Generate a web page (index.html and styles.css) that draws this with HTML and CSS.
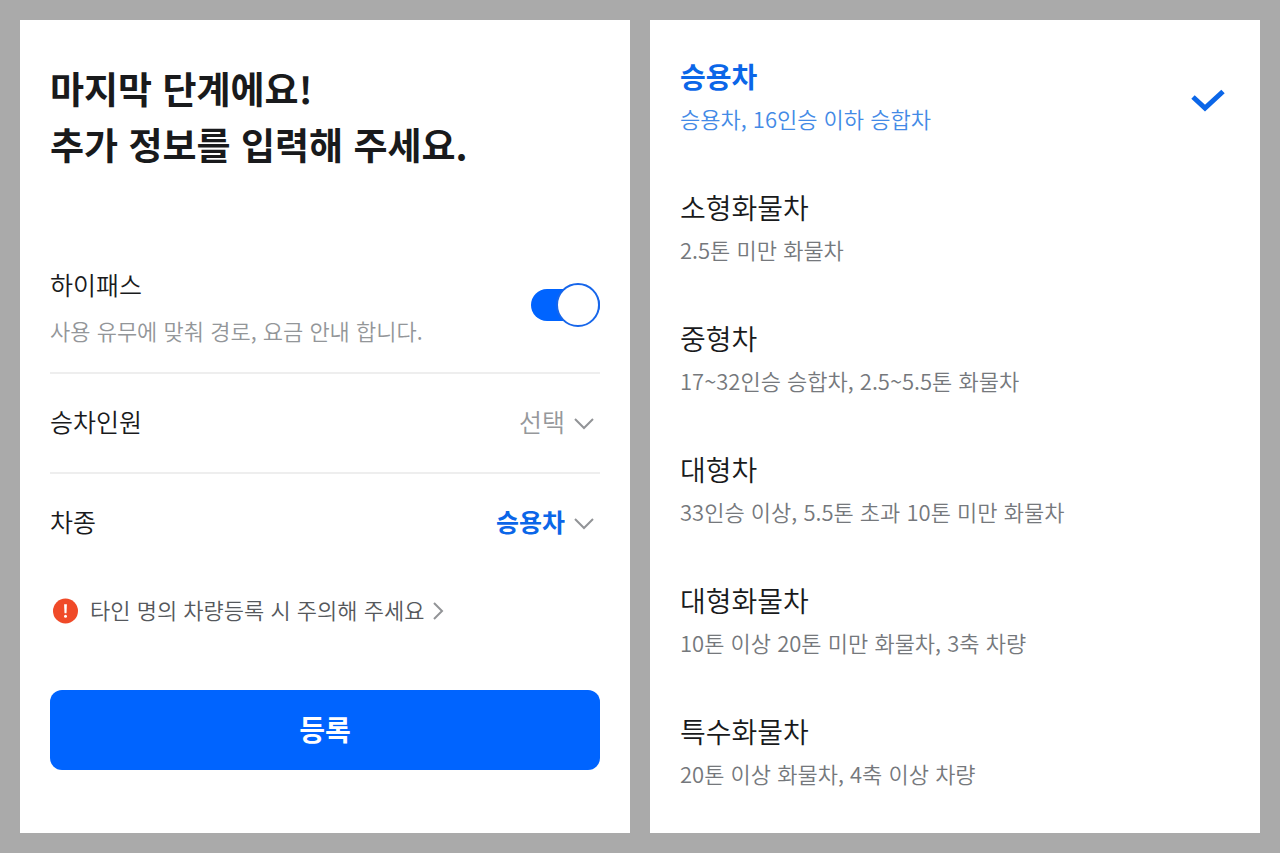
FILE: index.html
```html
<!DOCTYPE html>
<html lang="ko">
<head>
<meta charset="utf-8">
<meta name="viewport" content="width=device-width, initial-scale=1">
<title>차량 정보 등록</title>
<link rel="stylesheet" href="styles.css">
</head>
<body>
<main class="panels">
  <form class="panel details">
    <h1 class="title">마지막 단계에요!<br>추가 정보를 입력해 주세요.</h1>

    <div class="row row-hipass">
      <label class="row-text" for="hipass">
        <span class="row-label">하이패스</span>
        <span class="row-hint">사용 유무에 맞춰 경로, 요금 안내 합니다.</span>
      </label>
      <input class="toggle" type="checkbox" role="switch" id="hipass" checked>
    </div>

    <div class="row">
      <label class="row-label" for="passengers">승차인원</label>
      <span class="picker">
        <select class="select" id="passengers"><option>선택</option></select>
        <svg class="chevron" viewBox="0 0 22 14" aria-hidden="true"><path d="M2 3l9 9 9-9"/></svg>
      </span>
    </div>

    <div class="row">
      <label class="row-label" for="cartype">차종</label>
      <span class="picker">
        <select class="select select-chosen" id="cartype"><option>승용차</option></select>
        <svg class="chevron" viewBox="0 0 22 14" aria-hidden="true"><path d="M2 3l9 9 9-9"/></svg>
      </span>
    </div>

    <a class="notice" href="#notice">
      <svg class="notice-icon" viewBox="0 0 26 26" aria-hidden="true"><circle cx="13.5" cy="13" r="12.5" fill="#f04a28"/><path d="M12.1 6.2h2.8l-.4 9h-2z" fill="#fff"/><circle cx="13.5" cy="18.2" r="1.5" fill="#fff"/></svg>
      <span class="notice-text">타인 명의 차량등록 시 주의해 주세요</span>
      <svg class="notice-arrow" viewBox="0 0 12 20" aria-hidden="true"><path d="M2 2l8 8-8 8"/></svg>
    </a>

    <button class="submit" type="submit">등록</button>
  </form>

  <form class="panel types">
    <label class="type">
      <input class="type-input" type="radio" name="type" checked>
      <span class="type-text"><span class="type-name">승용차</span><span class="type-desc">승용차, 16인승 이하 승합차</span></span>
      <svg class="check" viewBox="0 0 36 24" aria-hidden="true"><path d="M3 9l12 11L33 3.5"/></svg>
    </label>
    <label class="type">
      <input class="type-input" type="radio" name="type">
      <span class="type-text"><span class="type-name">소형화물차</span><span class="type-desc">2.5톤 미만 화물차</span></span>
    </label>
    <label class="type">
      <input class="type-input" type="radio" name="type">
      <span class="type-text"><span class="type-name">중형차</span><span class="type-desc">17~32인승 승합차, 2.5~5.5톤 화물차</span></span>
    </label>
    <label class="type">
      <input class="type-input" type="radio" name="type">
      <span class="type-text"><span class="type-name">대형차</span><span class="type-desc">33인승 이상, 5.5톤 초과 10톤 미만 화물차</span></span>
    </label>
    <label class="type">
      <input class="type-input" type="radio" name="type">
      <span class="type-text"><span class="type-name">대형화물차</span><span class="type-desc">10톤 이상 20톤 미만 화물차, 3축 차량</span></span>
    </label>
    <label class="type">
      <input class="type-input" type="radio" name="type">
      <span class="type-text"><span class="type-name">특수화물차</span><span class="type-desc">20톤 이상 화물차, 4축 이상 차량</span></span>
    </label>
  </form>
</main>
</body>
</html>
```
FILE: styles.css
```css
* { box-sizing: border-box; }

body {
  margin: 0;
  background: #aaa;
  color: #191a1c;
  font-family: "Noto Sans CJK KR", sans-serif;
}

.panels {
  display: grid;
  grid-template-columns: 1fr 1fr;
  gap: 20px;
  min-height: 100vh;
  padding: 20px;
}

.panel {
  display: flex;
  flex-direction: column;
  padding: 35px 30px;
  background: #fff;
}

.details { padding-top: 40px; }

.title {
  margin: 0 0 89px;
  font-size: 37px;
  font-weight: 700;
  line-height: 56px;
}

.row {
  display: flex;
  align-items: center;
  justify-content: space-between;
  min-height: 100px;
  padding-bottom: 4px;
}

.row + .row { border-top: 2px solid #eee; }

.row-hipass {
  align-items: flex-start;
  min-height: 111px;
}

.row-text {
  display: flex;
  flex-direction: column;
}

.row-label {
  font-size: 25px;
  font-weight: 350;
  line-height: 46px;
}

.row-hint {
  color: #939699;
  font-size: 22px;
  font-weight: 350;
  line-height: 46px;
}

.toggle {
  appearance: none;
  position: relative;
  width: 69px;
  height: 32px;
  margin: 28px 0 0;
  border-radius: 16px;
  background: #bbb;
}

.toggle:checked { background: #0064ff; }

.toggle::after {
  content: "";
  position: absolute;
  box-sizing: border-box;
  top: -6px;
  right: 0;
  width: 44px;
  height: 44px;
  border: 2px solid #1766ea;
  border-radius: 50%;
  background: #fff;
}

.picker {
  display: flex;
  align-items: center;
  gap: 8px;
  padding-right: 5px;
}

.select {
  appearance: none;
  field-sizing: content;
  padding: 0;
  border: 0;
  background: none;
  color: #96989b;
  font: 350 25px/46px "Noto Sans CJK KR", sans-serif;
  text-align-last: right;
}

.select-chosen {
  color: #0b66e8;
  font-weight: 700;
}

.chevron {
  width: 22px;
  height: 14px;
  margin-top: 4px;
  fill: none;
  stroke: #929497;
  stroke-width: 2;
}

.notice {
  display: flex;
  align-items: center;
  gap: 8px;
  margin-top: 21px;
  padding-left: 2px;
  color: #55585c;
  font-size: 22px;
  font-weight: 350;
  line-height: 32px;
  text-decoration: none;
}

.notice-text { padding-bottom: 3px; }

.notice-icon {
  width: 26px;
  height: 26px;
  margin-right: 4px;
}

.notice-arrow {
  width: 12px;
  height: 20px;
  fill: none;
  stroke: #929497;
  stroke-width: 2;
}

.submit {
  margin-top: 62px;
  padding: 19px 20px 21px;
  border: 0;
  border-radius: 12px;
  background: #0064ff;
  color: #fff;
  font: 700 28px/40px "Noto Sans CJK KR", sans-serif;
}

.types { gap: 47px; }

.type {
  display: flex;
  align-items: center;
  justify-content: space-between;
  padding-right: 4px;
}

.type-input {
  appearance: none;
  position: absolute;
  margin: 0;
}

.type-text {
  display: flex;
  flex-direction: column;
  line-height: 42px;
}

.type-name {
  font-size: 28px;
  font-weight: 350;
}

.type-desc {
  color: #75787c;
  font-size: 22px;
  font-weight: 350;
}

.type-input:checked + .type-text .type-name {
  color: #0b66e8;
  font-weight: 700;
}

.type-input:checked + .type-text .type-desc { color: #438ae6; }

.check {
  width: 36px;
  height: 24px;
  margin-top: 5px;
  fill: none;
  stroke: #0b66e8;
  stroke-width: 5;
}
```
